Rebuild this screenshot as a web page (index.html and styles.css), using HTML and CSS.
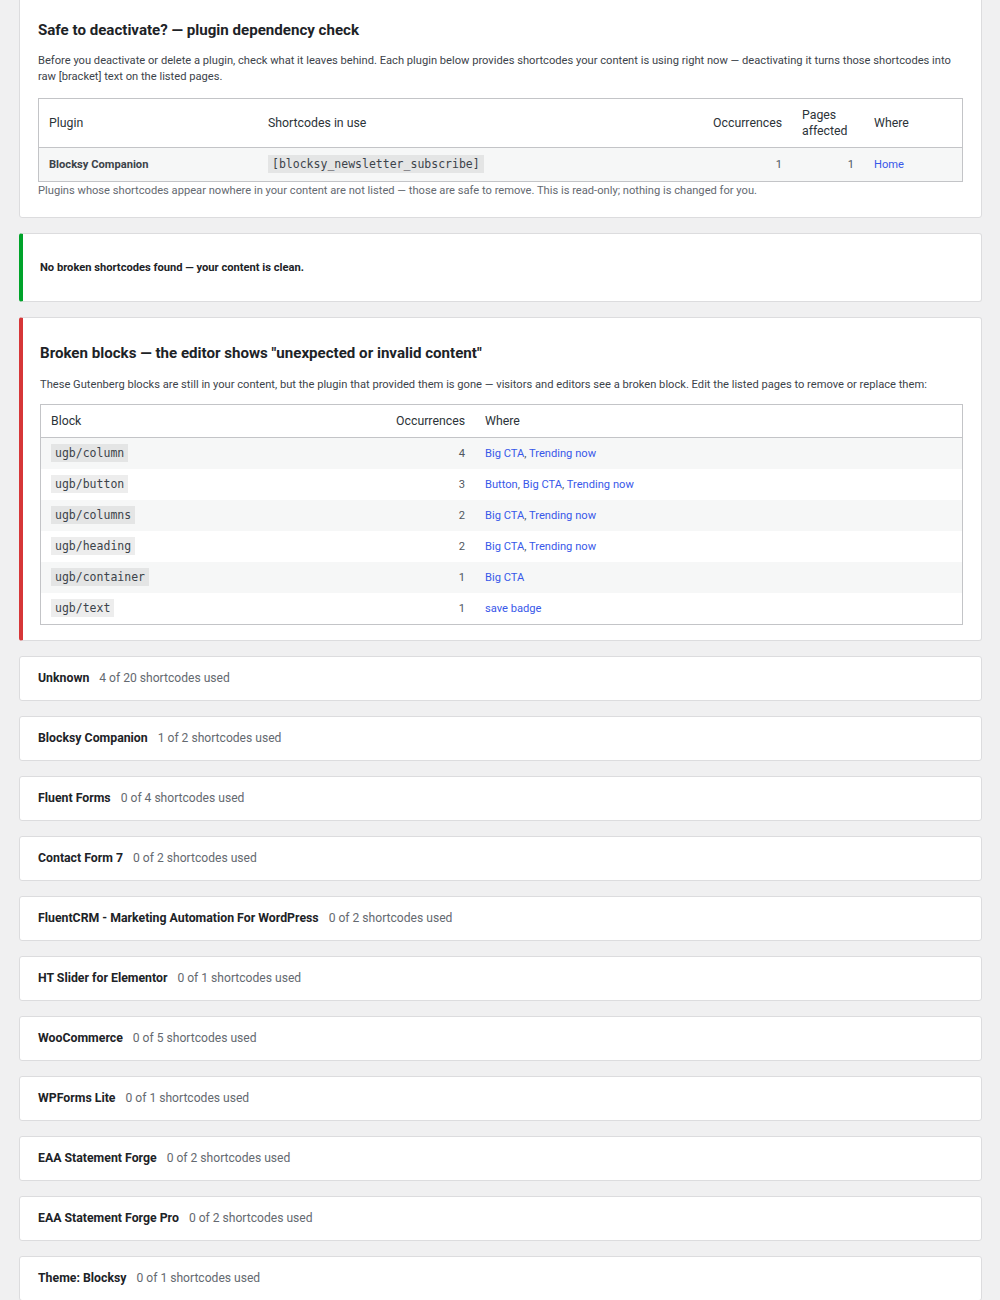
FILE: index.html
```html
<!DOCTYPE html>
<html lang="en">
<head>
  <meta charset="UTF-8">
  <title>Shortcode check</title>
  <meta name="viewport" content="width=device-width, initial-scale=1.0">
  <link rel="stylesheet" href="styles.css">
</head>
<body>
  <div class="wrap">
    <!-- dependency check -->
    <div class="card card-top">
      <h2>Safe to deactivate? — plugin dependency check</h2>
      <p class="desc">Before you deactivate or delete a plugin, check what it leaves behind. Each plugin below provides shortcodes your content is using right now — deactivating it turns those shortcodes into raw [bracket] text on the listed pages.</p>
      <table class="widefat deps">
        <thead>
          <tr>
            <th class="col-plugin">Plugin</th>
            <th>Shortcodes in use</th>
            <th class="num col-occ">Occurrences</th>
            <th class="col-pages">Pages affected</th>
            <th class="col-where">Where</th>
          </tr>
        </thead>
        <tbody>
          <tr>
            <td><strong>Blocksy Companion</strong></td>
            <td><code>[blocksy_newsletter_subscribe]</code></td>
            <td class="num">1</td>
            <td class="num">1</td>
            <td><a href="#">Home</a></td>
          </tr>
        </tbody>
      </table>
      <p class="note">Plugins whose shortcodes appear nowhere in your content are not listed — those are safe to remove. This is read-only; nothing is changed for you.</p>
    </div>

    <div class="card notice notice-ok">
      <p><strong>No broken shortcodes found — your content is clean.</strong></p>
    </div>

    <!-- broken blocks -->
    <div class="card notice notice-err">
      <h2>Broken blocks — the editor shows "unexpected or invalid content"</h2>
      <p class="desc">These Gutenberg blocks are still in your content, but the plugin that provided them is gone — visitors and editors see a broken block. Edit the listed pages to remove or replace them:</p>
      <table class="widefat blocks">
        <thead>
          <tr>
            <th>Block</th>
            <th class="num col-bocc">Occurrences</th>
            <th class="col-bwhere">Where</th>
          </tr>
        </thead>
        <tbody>
          <tr><td><code>ugb/column</code></td><td class="num">4</td><td><a href="#">Big CTA</a>, <a href="#">Trending now</a></td></tr>
          <tr><td><code>ugb/button</code></td><td class="num">3</td><td><a href="#">Button</a>, <a href="#">Big CTA</a>, <a href="#">Trending now</a></td></tr>
          <tr><td><code>ugb/columns</code></td><td class="num">2</td><td><a href="#">Big CTA</a>, <a href="#">Trending now</a></td></tr>
          <tr><td><code>ugb/heading</code></td><td class="num">2</td><td><a href="#">Big CTA</a>, <a href="#">Trending now</a></td></tr>
          <tr><td><code>ugb/container</code></td><td class="num">1</td><td><a href="#">Big CTA</a></td></tr>
          <tr><td><code>ugb/text</code></td><td class="num">1</td><td><a href="#">save badge</a></td></tr>
        </tbody>
      </table>
    </div>

    <!-- per plugin summary -->
    <div class="card plugin-row"><strong>Unknown</strong><span class="count">4 of 20 shortcodes used</span></div>
    <div class="card plugin-row"><strong>Blocksy Companion</strong><span class="count">1 of 2 shortcodes used</span></div>
    <div class="card plugin-row"><strong>Fluent Forms</strong><span class="count">0 of 4 shortcodes used</span></div>
    <div class="card plugin-row"><strong>Contact Form 7</strong><span class="count">0 of 2 shortcodes used</span></div>
    <div class="card plugin-row"><strong>FluentCRM - Marketing Automation For WordPress</strong><span class="count">0 of 2 shortcodes used</span></div>
    <div class="card plugin-row"><strong>HT Slider for Elementor</strong><span class="count">0 of 1 shortcodes used</span></div>
    <div class="card plugin-row"><strong>WooCommerce</strong><span class="count">0 of 5 shortcodes used</span></div>
    <div class="card plugin-row"><strong>WPForms Lite</strong><span class="count">0 of 1 shortcodes used</span></div>
    <div class="card plugin-row"><strong>EAA Statement Forge</strong><span class="count">0 of 2 shortcodes used</span></div>
    <div class="card plugin-row"><strong>EAA Statement Forge Pro</strong><span class="count">0 of 2 shortcodes used</span></div>
    <div class="card plugin-row"><strong>Theme: Blocksy</strong><span class="count">0 of 1 shortcodes used</span></div>
  </div>
</body>
</html>
```

FILE: styles.css
```css
body {
  margin: 0;
  background: #f0f0f1;
  font-family: Roboto, "Liberation Sans", Arial, sans-serif;
  font-size: 11.15px;
  line-height: 16px;
  color: #3c434a;
}
.wrap {
  margin: -1px 18px 0 19px;
}
.card {
  background: #fff;
  border: 1px solid #dcdcde;
  border-radius: 3px;
  padding: 0 18px;
  margin-bottom: 15px;
}
.card-top {
  border-top-left-radius: 0;
  border-top-right-radius: 0;
  padding-top: 20px;
  padding-bottom: 18px;
}
h2 {
  margin: 0;
  font-size: 15.1px;
  line-height: 20px;
  font-weight: 700;
  color: #1d2327;
}
.desc {
  margin: 13px 0 13px;
}
.note {
  margin: 1px 0 0;
  color: #646970;
}
.notice {
  border-left-width: 4px;
  padding-left: 17px;
}
.notice-ok {
  border-left-color: #00a32a;
  padding-top: 26px;
  padding-bottom: 25px;
}
.notice-ok p {
  margin: 0;
  color: #1d2327;
}
.notice-err {
  border-left-color: #d63638;
  padding-top: 25px;
  padding-bottom: 15px;
}
.notice-err .desc {
  margin: 14px 0 11px;
}

/* tables */
.widefat {
  width: 100%;
  border-collapse: collapse;
  table-layout: fixed;
  border: 1px solid #c3c4c7;
}
.widefat th {
  text-align: left;
  font-weight: 400;
  font-size: 12.3px;
  color: #2c3338;
  padding: 8px 10px;
  border-bottom: 1px solid #c3c4c7;
}
.widefat td {
  padding: 8px 10px;
  color: #50575e;
  vertical-align: middle;
}
.widefat td strong {
  color: #3c434a;
}
.widefat tbody tr:nth-child(odd) {
  background: #f6f7f7;
}
.widefat .num {
  text-align: right;
}
.col-plugin { width: 199px; }
.col-occ { width: 92px; }
.col-pages { width: 52px; }
.col-where { width: 78px; }
.blocks td {
  padding: 7px 10px;
}
.col-bocc { width: 92px; }
.col-bwhere { width: 467px; }

code {
  font-family: "DejaVu Sans Mono", "Liberation Mono", monospace;
  font-size: 11.5px;
  background: rgba(0, 0, 0, 0.07);
  color: #3c434a;
  padding: 2px 4px;
}
a {
  color: #3858e9;
  text-decoration: none;
}

/* summary rows */
.plugin-row {
  font-size: 12.1px;
  padding-top: 13px;
  padding-bottom: 13px;
  line-height: 17px;
}
.plugin-row strong {
  font-size: 12.3px;
  color: #1d2327;
}
.count {
  margin-left: 10px;
  color: #646970;
}
```
